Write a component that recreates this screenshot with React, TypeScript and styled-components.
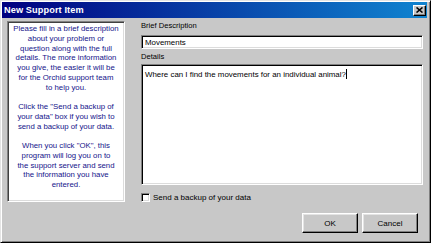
import React from "react";
import styled, { createGlobalStyle } from "styled-components";

const Global = createGlobalStyle`
  html, body { margin: 0; padding: 0; background: #c8c8c8; }
  body { font-family: "Liberation Sans", Arial, sans-serif; }
`;

const Window = styled.div`
  box-sizing: border-box;
  width: 431px;
  height: 243px;
  background: #c8c8c8;
  border-top: 1px solid #e4e4e4;
  border-left: 1px solid #e4e4e4;
  border-right: 1px solid #000;
  border-bottom: 1px solid #000;
  box-shadow: inset 1px 1px 0 #fff, inset -1px -1px 0 #808080;
  padding: 1px 3px 3px 1px;
  display: flex;
  flex-direction: column;
`;

const TitleBar = styled.div`
  height: 16px;
  flex: none;
  display: flex;
  align-items: center;
  background: linear-gradient(to right, #000080, #1084d0);
  padding-left: 2px;
  padding-right: 1px;
`;

const Title = styled.span`
  color: #fff;
  font-weight: bold;
  font-size: 9.2px;
  letter-spacing: 0.1px;
`;

const CloseButton = styled.div`
  box-sizing: border-box;
  margin-left: auto;
  width: 13px;
  height: 11px;
  background: #c8c8c8;
  border-top: 1px solid #fff;
  border-left: 1px solid #fff;
  border-right: 1px solid #000;
  border-bottom: 1px solid #000;
  box-shadow: inset -1px -1px 0 #808080;
  display: flex;
  align-items: center;
  justify-content: center;
`;

const Body = styled.div`
  flex: 1;
  display: flex;
  padding: 3px 0 0 5px;
  min-height: 0;
`;

const InfoPanel = styled.div`
  box-sizing: border-box;
  flex: none;
  width: 118px;
  height: 181px;
  background: #fff;
  border-top: 1px solid #808080;
  border-left: 1px solid #808080;
  border-right: 1px solid #fff;
  border-bottom: 1px solid #fff;
  box-shadow: inset 1px 1px 0 #404040, inset -1px -1px 0 #dcdcdc;
  padding: 2px 2px;
  color: #14148a;
  font-size: 7.8px;
  line-height: 9.75px;
  text-align: center;
  white-space: nowrap;
`;

const Para = styled.p`
  margin: 0 0 9.75px 0;
`;

const Form = styled.div`
  flex: 1;
  display: flex;
  flex-direction: column;
  margin-left: 16px;
  padding-right: 4px;
`;

const Label = styled.div<{ $top: number }>`
  font-size: 7.6px;
  line-height: 10px;
  height: 10px;
  color: #000;
  margin-top: ${(p) => p.$top}px;
`;

const Sunken = styled.div`
  box-sizing: border-box;
  background: #fff;
  border-top: 1px solid #808080;
  border-left: 1px solid #808080;
  border-right: 1px solid #fff;
  border-bottom: 1px solid #fff;
  box-shadow: inset 1px 1px 0 #000, inset -1px -1px 0 #dcdcdc;
  color: #000;
  font-size: 7.9px;
`;

const TextInput = styled(Sunken)`
  height: 14px;
  margin-top: 4px;
  display: flex;
  align-items: center;
  padding-left: 3px;
`;

const TextArea = styled(Sunken)`
  height: 121px;
  margin-top: 2px;
  padding: 4px 3px;
  line-height: 10px;
`;

const Caret = styled.span`
  display: inline-block;
  width: 1px;
  height: 10px;
  background: #000;
  vertical-align: -2px;
`;

const CheckRow = styled.div`
  display: flex;
  align-items: center;
  gap: 3px;
  margin-top: 8px;
  height: 9px;
  font-size: 8px;
  color: #000;
`;

const CheckBox = styled(Sunken)`
  width: 9px;
  height: 9px;
  flex: none;
`;

const ButtonRow = styled.div`
  display: flex;
  justify-content: flex-end;
  gap: 4px;
  margin-top: 11px;
  padding-right: 5px;
`;

const Button = styled.div`
  box-sizing: border-box;
  width: 56px;
  height: 20px;
  background: #c8c8c8;
  border-top: 1px solid #fff;
  border-left: 1px solid #fff;
  border-right: 1px solid #000;
  border-bottom: 1px solid #000;
  box-shadow: inset -1px -1px 0 #808080, inset 1px 1px 0 #e4e4e4;
  display: flex;
  align-items: center;
  justify-content: center;
  font-size: 8px;
  color: #000;
`;

export default function App() {
  return (
    <>
      <Global />
      <Window>
        <TitleBar>
          <Title>New Support Item</Title>
          <CloseButton>
            <svg width="7" height="6" viewBox="0 0 7 6">
              <path d="M0.5 0.5 L6.5 5.5 M6.5 0.5 L0.5 5.5" stroke="#000" strokeWidth="1.6" />
            </svg>
          </CloseButton>
        </TitleBar>
        <Body>
          <InfoPanel>
            <Para>
              Please fill in a brief description
              <br />
              about your problem or
              <br />
              question along with the full
              <br />
              details. The more information
              <br />
              you give, the easier it will be
              <br />
              for the Orchid support team
              <br />
              to help you.
            </Para>
            <Para>
              Click the "Send a backup of
              <br />
              your data" box if you wish to
              <br />
              send a backup of your data.
            </Para>
            <Para>
              When you click "OK", this
              <br />
              program will log you on to
              <br />
              the support server and send
              <br />
              the information you have
              <br />
              entered.
            </Para>
          </InfoPanel>
          <Form>
            <Label $top={0}>Brief Description</Label>
            <TextInput>Movements</TextInput>
            <Label $top={3}>Details</Label>
            <TextArea>
              Where can I find the movements for an individual animal?
              <Caret />
            </TextArea>
            <CheckRow>
              <CheckBox />
              <span>Send a backup of your data</span>
            </CheckRow>
            <ButtonRow>
              <Button>OK</Button>
              <Button>Cancel</Button>
            </ButtonRow>
          </Form>
        </Body>
      </Window>
    </>
  );
}
